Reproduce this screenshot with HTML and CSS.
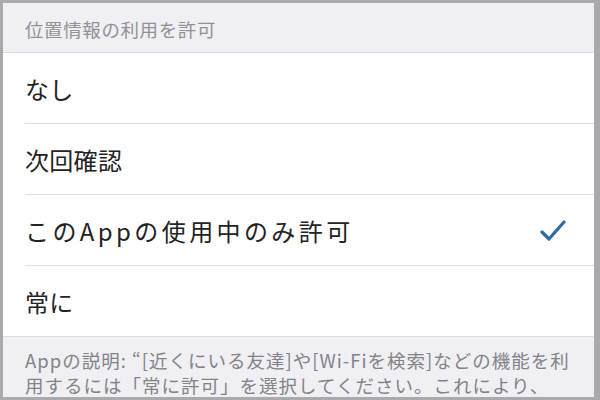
FILE: index.html
```html
<!DOCTYPE html>
<html lang="ja">
<head>
<meta charset="utf-8">
<link rel="stylesheet" href="styles.css">
</head>
<body>
<div class="frame">
  <div class="section-header">位置情報の利用を許可</div>
  <div class="list">
    <div class="row"><span class="label">なし</span></div>
    <div class="row"><span class="label">次回確認</span></div>
    <div class="row"><span class="label label-wide">このAppの使用中のみ許可</span>
      <svg class="check" width="26" height="22" viewBox="0 0 26 22"><path d="M2 12 L9 19 L24 2" fill="none" stroke="#2f6ba6" stroke-width="3.2" stroke-linecap="round" stroke-linejoin="round"/></svg>
    </div>
    <div class="row last"><span class="label">常に</span></div>
  </div>
  <div class="footer">Appの説明: “[近くにいる友達]や[Wi-Fiを検索]などの機能を利用するには「常に許可」を選択してください。これにより、</div>
</div>
</body>
</html>
```
FILE: styles.css
```css
html, body {
  margin: 0;
  padding: 0;
  width: 600px;
  height: 400px;
  overflow: hidden;
  background: #a9a9ab;
}
.frame {
  box-sizing: border-box;
  width: 600px;
  height: 400px;
  border-style: solid;
  border-color: #aaaaac;
  border-width: 3px 6px 3px 3px;
  background: #efeff4;
  overflow: hidden;
  font-family: "Noto Sans CJK JP", "Noto Sans", sans-serif;
}
.section-header {
  height: 50px;
  box-sizing: border-box;
  padding: 14px 0 0 22px;
  font-size: 18.5px;
  line-height: 24px;
  letter-spacing: 0.6px;
  color: #929296;
  border-bottom: 1px solid #dcdce0;
}
.list {
  background: #fff;
  padding-left: 22px;
}
.row {
  height: 70px;
  display: flex;
  align-items: center;
  justify-content: space-between;
  padding-right: 28px;
  border-bottom: 1px solid #dedee2;
}
.row.last {
  border-bottom: none;
}
.label {
  font-size: 24px;
  color: #232325;
  letter-spacing: 0.3px;
}
.label-wide {
  letter-spacing: 3.4px;
}
.check {
  display: block;
  margin-top: 2px;
}
.footer {
  border-top: 1px solid #dcdce0;
  padding: 11px 6px 0 22px;
  font-size: 18.5px;
  line-height: 25px;
  letter-spacing: 1px;
  color: #838387;
}
```
